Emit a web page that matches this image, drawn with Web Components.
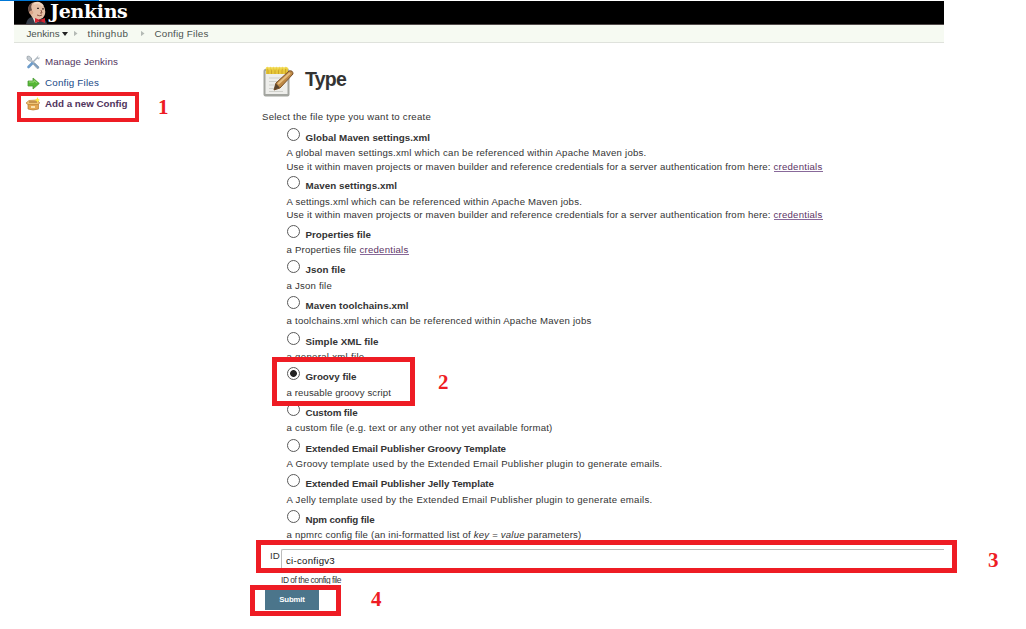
<!DOCTYPE html>
<html lang="en"><head><meta charset="utf-8"><title>Jenkins - Config Files</title>
<style>html,body{margin:0;background:#fff}body{width:1026px;height:629px;overflow:hidden;font-family:"Liberation Sans",Arial,sans-serif;color:#333}</style></head>
<body><config-page></config-page>
<script>
// Text whose letter spacing is adjusted so that the run fills the width in "w".
customElements.define('fit-text', class extends HTMLElement{
  connectedCallback(){
    if(this.shadowRoot) return;
    this.attachShadow({mode:'open'}).innerHTML='<style>:host{display:inline-block;white-space:pre}span{display:inline-block}</style><span><slot></slot></span>';
    const s=this.shadowRoot.querySelector('span'), w=+this.getAttribute('w'), n=this.textContent.length;
    s.style.letterSpacing='0px';
    const d=(w-s.getBoundingClientRect().width)/n;
    s.style.letterSpacing=d+'px';
  }
});
const define=(name,html)=>customElements.define(name,class extends HTMLElement{
  constructor(){super();this.attachShadow({mode:'open'}).innerHTML=typeof html==='function'?html(this):html;}
});
define('app-header',`<style>
:host{display:block;width:930px;margin:1px 0 0 14px}
.bar{height:23px;background:#000;border-bottom:1px solid #514a4a;display:flex;color:#fff}
.bar svg{margin-left:12px;flex:none}
.bar fit-text{font:bold 19px/20px "DejaVu Serif",serif;margin-left:3px}
nav{height:17px;background:#f6faf2;border-bottom:1px solid #dfe2dc;display:flex;align-items:center;font-size:9.800px;line-height:17px;color:#4b5350;padding-left:12.5px}
.d{border:3px solid transparent;border-top:4px solid #222;border-bottom:0;margin:0 6px 0 2px}
.c{width:4px;height:6px;background:#b4bab5;clip-path:polygon(0 0,100% 50%,0 100%)}
</style>
<div class="bar"><svg width="21" height="23" viewBox="0 0 21 23"><path d="M0 23Q1 17 6 16L15 17Q20 18 21 23Z" fill="#353d48"/><path d="M6 15L9 22 14 20 15 15Z" fill="#e5e4df"/><path d="M3 11Q1 5 6 2 12-1 17 4 20 8 19 13 18 17 14 18 9 19 6 16Z" fill="#e5c0a6"/><path d="M3 12Q0 4 7 1.500 4 5 6 9L5 12Z" fill="#6b5047"/><path d="M8 3Q13 0 17 5" fill="none" stroke="#f1d4bd" stroke-width="2"/><circle cx="5.300" cy="11.500" r="2" fill="#d7a487"/><path d="M11 7.300h2M16 7.800h2" stroke="#493731" stroke-width="1.300"/><path d="M15 9l1 3-2 0M11 14q3 1.500 5 0" fill="none" stroke="#8a5343"/><path d="M9 17l5 2 5-2v5l-5-2-5 2Z" fill="#d52330"/><circle cx="14" cy="19.500" r="1.500" fill="#8e1a28"/></svg><fit-text w="77.500">Jenkins</fit-text></div>
<nav><fit-text w="33">Jenkins</fit-text><i class="d"></i><i class="c"></i><fit-text w="41" style="margin-left:10px">thinghub</fit-text><i class="c" style="margin-left:12px"></i><fit-text w="54" style="margin-left:10px">Config Files</fit-text></nav>`);
define('side-link',`<style>:host{display:flex;align-items:center;height:21.300px;gap:5px;font-size:9.800px;line-height:14px;color:#51345d}::slotted(svg){flex:none;width:14px;height:14px}</style><slot></slot>`);
define('side-panel',`<style>:host{display:block;width:248px;padding:8px 0 0 26px;box-sizing:border-box;flex:none}</style>
<side-link><svg viewBox="0 0 14 14"><path d="M1 1.500L3 1 5.500 3 5.500 5 12.500 11.500Q13.500 13 12 13.500L11 13.500 4.500 6 3 6 1 4Z" fill="#c5ccd2" stroke="#8b959e" stroke-width=".6"/><path d="M8.500 9L12.200 12.500" stroke="#7f9ebd" stroke-width="1.800" stroke-linecap="round"/><path d="M6.500 8L2.500 12" stroke="#6c9ccb" stroke-width="2.600" stroke-linecap="round"/><path d="M6.500 7.500L12 2" stroke="#aab4bd" stroke-width="1.400"/><path d="M10.500 3.500L11.500 1 13 .5 11.500 2 12.500 3 14 2 13 4.500Z" fill="#b7c0c7"/></svg><fit-text w="73">Manage Jenkins</fit-text></side-link>
<side-link style="color:#204a87"><svg viewBox="0 0 14 14"><path d="M2 5H7V2L13.300 7.500 7 13V10H2Z" fill="#55b735" stroke="#4d9b39" stroke-width=".8"/><path d="M3 6H8V4.500L11 7" stroke="#9adb78" fill="none"/></svg><fit-text w="54">Config Files</fit-text></side-link>
<side-link style="font-weight:bold"><svg viewBox="0 0 14 14"><path d="M2 6.500H12.500V12Q7 14 2 12Z" fill="#e2a650" stroke="#b67b30" stroke-width=".7"/><path d="M3 3.500L11 3 13.800 6 12 7.500H2L0 6Z" fill="#f0c477" stroke="#bb8236" stroke-width=".7"/><path d="M3 5H11" stroke="#996425"/><path d="M5 9h4v2H5Z" fill="#fae2ad"/><path d="M11.500 0L12.300 2 14 3 12.300 4 11.500 5.500 10.600 4 9 3 10.600 2Z" fill="#ffe842"/></svg><fit-text w="82.500">Add a new Config</fit-text></side-link>`);
define('file-option',e=>`<style>
:host{display:block;height:35.700px;font-size:9.600px;line-height:13.400px}:host([two]){height:48.300px}
.t{display:flex;height:20.300px}
.r{width:11px;height:11px;border:1px solid #5a5a5a;border-radius:50%;margin:2px 6px 0 0;flex:none;display:block;background:#fff}
:host([on]) .r{background:radial-gradient(circle,#222 0 3px,#fff 3.800px)}
b{font-size:9.800px;line-height:13px;margin-top:5px}
</style><div class="t"><i class="r"></i><b><fit-text w="${+e.getAttribute('tw')+.5}">${e.getAttribute('label')}</fit-text></b></div><div><slot></slot></div>`);
define('type-form',`<style>
:host{display:block;width:682px}
.h{display:flex;align-items:center;height:32px;margin-top:23px;padding-left:1px;font:bold 19.500px/24px "Liberation Sans",Arial,sans-serif}
.h svg{margin-right:10px}.h fit-text{margin-top:-6px}
.i{font-size:9.600px;line-height:13px;margin:11.500px 0 3.500px}
.o{padding-left:24.500px}
.f{display:flex;height:25px;padding:5px 0 0 8px;box-sizing:border-box;font-size:9.700px}
.f>span{width:11px;line-height:14px}
.in{flex:1;height:24px;border:1px solid #bbb;border-right:0;box-sizing:border-box;border-radius:2px 0 0 0;color:#111;padding-left:4px;line-height:22px}
.hint{font-size:8.400px;line-height:9px;height:8px;overflow:hidden;margin:7.600px 0 0 19px;color:#333}
.btn{width:54px;height:21px;background:#4b758b;color:#fff;border:0;margin:5px 0 0 3px;padding:0;font:bold 7.800px/21px "Liberation Sans",Arial,sans-serif;text-align:center;display:block}
a{color:#5c3566;border-bottom:1px solid #88699a;display:inline-block;line-height:9px}
</style>
<div class="h"><svg width="32" height="32" viewBox="0 0 32 32"><rect x="0.500" y="3" width="26" height="27.500" rx="2" fill="#a3a5a0"/><rect x="2.500" y="5" width="22" height="23" fill="#eeeeeb"/><path d="M6 12h15M6 15.500h12M6 19h10M6 22.500h8M6 25.500h14" stroke="#cfd0cb" stroke-width="1"/><rect x="3" y="2" width="22" height="6" fill="#e6c738"/><path d="M5 3v5M8.500 3v5M12 3v5M15.500 3v5M19 3v5M22.500 3v5" stroke="#cda628" stroke-width="1"/><path d="M3 3q1.500-3 3 0 1.500-3 3 0 1.500-3 3 0 1.500-3 3 0 1.500-3 3 0 1.500-3 3 0 1.500-3 4 0" fill="none" stroke="#f1d951" stroke-width="1.500"/><path d="M11 24L13 17 26 5Q30 4 30 8L17 22Z" fill="#bd8844" stroke="#7b5128"/><path d="M15 18L27 7" stroke="#e5bd7e" stroke-width="2"/><path d="M11 24l1.800-6.500 4 4Z" fill="#5b452f"/></svg><fit-text w="41">Type</fit-text></div>
<div class="i"><fit-text w="169">Select the file type you want to create</fit-text></div>
<div class="o">
<file-option two label="Global Maven settings.xml" tw="124"><fit-text w="360">A global maven settings.xml which can be referenced within Apache Maven jobs.</fit-text><br><fit-text w="487">Use it within maven projects or maven builder and reference credentials for a server authentication from here: </fit-text><a><fit-text w="49">credentials</fit-text></a></file-option>
<file-option two label="Maven settings.xml" tw="91"><fit-text w="295.500">A settings.xml which can be referenced within Apache Maven jobs.</fit-text><br><fit-text w="487">Use it within maven projects or maven builder and reference credentials for a server authentication from here: </fit-text><a><fit-text w="49">credentials</fit-text></a></file-option>
<file-option label="Properties file" tw="65"><fit-text w="73">a Properties file </fit-text><a><fit-text w="49">credentials</fit-text></a></file-option>
<file-option label="Json file" tw="39.500"><fit-text w="45.500">a Json file</fit-text></file-option>
<file-option label="Maven toolchains.xml" tw="102.500"><fit-text w="305">a toolchains.xml which can be referenced within Apache Maven jobs</fit-text></file-option>
<file-option label="Simple XML file" tw="72.500"><fit-text w="78">a general xml file</fit-text></file-option>
<file-option on label="Groovy file" tw="50.500"><fit-text w="104.500">a reusable groovy script</fit-text></file-option>
<file-option label="Custom file" tw="51.500"><fit-text w="266">a custom file (e.g. text or any other not yet available format)</fit-text></file-option>
<file-option label="Extended Email Publisher Groovy Template" tw="200"><fit-text w="376">A Groovy template used by the Extended Email Publisher plugin to generate emails.</fit-text></file-option>
<file-option label="Extended Email Publisher Jelly Template" tw="188"><fit-text w="366">A Jelly template used by the Extended Email Publisher plugin to generate emails.</fit-text></file-option>
<file-option label="Npm config file" tw="68.500"><fit-text w="295">a npmrc config file (an ini-formatted list of <i>key</i> = <i>value</i> parameters)</fit-text></file-option>
</div>
<div class="f"><span>ID</span><div class="in"><fit-text w="49">ci-configv3</fit-text></div></div>
<div class="hint"><fit-text w="60">ID of the config file</fit-text></div>
<button class="btn"><fit-text w="25.500">Submit</fit-text></button>`);
// Numbered walkthrough frames laid over the page.
define('step-mark',e=>{const g=n=>e.getAttribute(n);return `<style>
:host{position:absolute;inset:0;pointer-events:none}
div{position:absolute;left:${g('x')}px;top:${g('y')}px;width:${g('w')}px;height:${g('h')}px;border:${g('b')||5}px solid #ee1c24;box-sizing:border-box}
span{position:absolute;left:${g('nx')}px;top:${g('ny')}px;font:bold 21px/24px "Liberation Serif",serif;color:#ee1c24}
</style><div></div><span>${g('n')}</span>`});
define('config-page',`<style>:host{display:block;position:relative;width:1026px;height:629px;overflow:hidden}
main{display:flex;margin-left:14px}side-panel{margin-left:-14px}
.s{position:absolute;left:0;top:0;width:99px;height:1px;background:#0078d7}</style>
<i class="s"></i><app-header></app-header><main><side-panel></side-panel><type-form style="margin-left:14px"></type-form></main>
<step-mark n="1" x="17" y="92" w="122" h="29.500" b="4.500" nx="158" ny="95"></step-mark>
<step-mark n="2" x="272" y="357" w="143" h="49" nx="438" ny="370"></step-mark>
<step-mark n="3" x="256" y="540" w="701" h="33" nx="988" ny="548"></step-mark>
<step-mark n="4" x="250" y="585" w="91" h="31" nx="371" ny="587"></step-mark>`);
</script></body></html>
